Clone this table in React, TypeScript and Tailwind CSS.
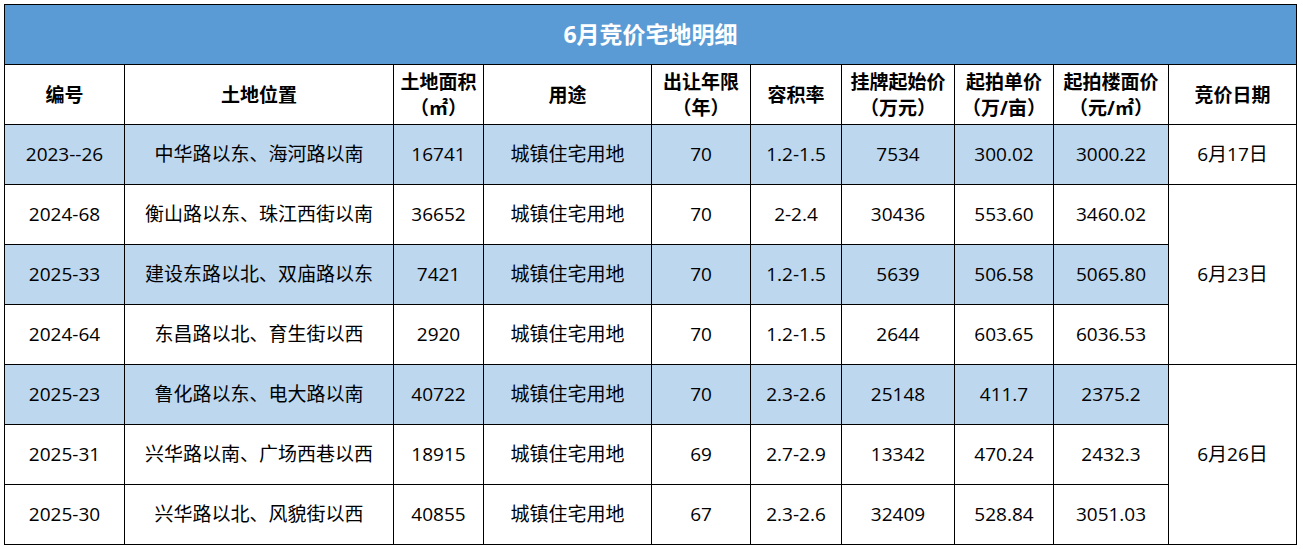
const cols = [
  "w-[120px]",
  "w-[269px]",
  "w-[90px]",
  "w-[168px]",
  "w-[99px]",
  "w-[91px]",
  "w-[113px]",
  "w-[99px]",
  "w-[115px]",
  "w-[128px]",
];

type Row = {
  id: string;
  place: string;
  area: string;
  use: string;
  years: string;
  ratio: string;
  start: string;
  unit: string;
  floor: string;
  blue: boolean;
  date?: { text: string; span: number };
};

const rows: Row[] = [
  { id: "2023--26", place: "中华路以东、海河路以南", area: "16741", use: "城镇住宅用地", years: "70", ratio: "1.2-1.5", start: "7534", unit: "300.02", floor: "3000.22", blue: true, date: { text: "6月17日", span: 1 } },
  { id: "2024-68", place: "衡山路以东、珠江西街以南", area: "36652", use: "城镇住宅用地", years: "70", ratio: "2-2.4", start: "30436", unit: "553.60", floor: "3460.02", blue: false, date: { text: "6月23日", span: 3 } },
  { id: "2025-33", place: "建设东路以北、双庙路以东", area: "7421", use: "城镇住宅用地", years: "70", ratio: "1.2-1.5", start: "5639", unit: "506.58", floor: "5065.80", blue: true },
  { id: "2024-64", place: "东昌路以北、育生街以西", area: "2920", use: "城镇住宅用地", years: "70", ratio: "1.2-1.5", start: "2644", unit: "603.65", floor: "6036.53", blue: false },
  { id: "2025-23", place: "鲁化路以东、电大路以南", area: "40722", use: "城镇住宅用地", years: "70", ratio: "2.3-2.6", start: "25148", unit: "411.7", floor: "2375.2", blue: true, date: { text: "6月26日", span: 3 } },
  { id: "2025-31", place: "兴华路以南、广场西巷以西", area: "18915", use: "城镇住宅用地", years: "69", ratio: "2.7-2.9", start: "13342", unit: "470.24", floor: "2432.3", blue: false },
  { id: "2025-30", place: "兴华路以北、风貌街以西", area: "40855", use: "城镇住宅用地", years: "67", ratio: "2.3-2.6", start: "32409", unit: "528.84", floor: "3051.03", blue: false },
];

const headers: string[][] = [
  ["编号"],
  ["土地位置"],
  ["土地面积", "（㎡）"],
  ["用途"],
  ["出让年限", "（年）"],
  ["容积率"],
  ["挂牌起始价", "（万元）"],
  ["起拍单价", "（万/亩）"],
  ["起拍楼面价", "（元/㎡）"],
  ["竞价日期"],
];

const cell = "border border-black text-center align-middle p-0";

export default function App() {
  return (
    <div className="min-h-screen bg-white pt-[4px] pl-[4px] font-['Open_Sans','Noto_Sans_CJK_SC',sans-serif] text-[19px] text-black">
      <table className="table-fixed border-collapse w-[1293px]">
        <colgroup>
          {cols.map((c, i) => (
            <col key={i} className={c} />
          ))}
        </colgroup>
        <tbody>
          <tr className="h-[60px]">
            <td colSpan={10} className={`${cell} bg-[#5b9bd5] text-white text-[23px] font-bold`}>
              6月竞价宅地明细
            </td>
          </tr>
          <tr className="h-[60px]">
            {headers.map((h, i) => (
              <td key={i} className={`${cell} font-bold leading-[26px]`}>
                {h.map((line, j) => (
                  <div key={j}>{line}</div>
                ))}
              </td>
            ))}
          </tr>
          {rows.map((r) => {
            const bg = r.blue ? "bg-[#bdd7ee]" : "bg-white";
            const vals = [r.id, r.place, r.area, r.use, r.years, r.ratio, r.start, r.unit, r.floor];
            return (
              <tr key={r.id} className="h-[60px]">
                {vals.map((v, i) => (
                  <td key={i} className={`${cell} ${bg}`}>
                    {v}
                  </td>
                ))}
                {r.date && (
                  <td rowSpan={r.date.span} className={`${cell} bg-white`}>
                    {r.date.text}
                  </td>
                )}
              </tr>
            );
          })}
        </tbody>
      </table>
    </div>
  );
}
